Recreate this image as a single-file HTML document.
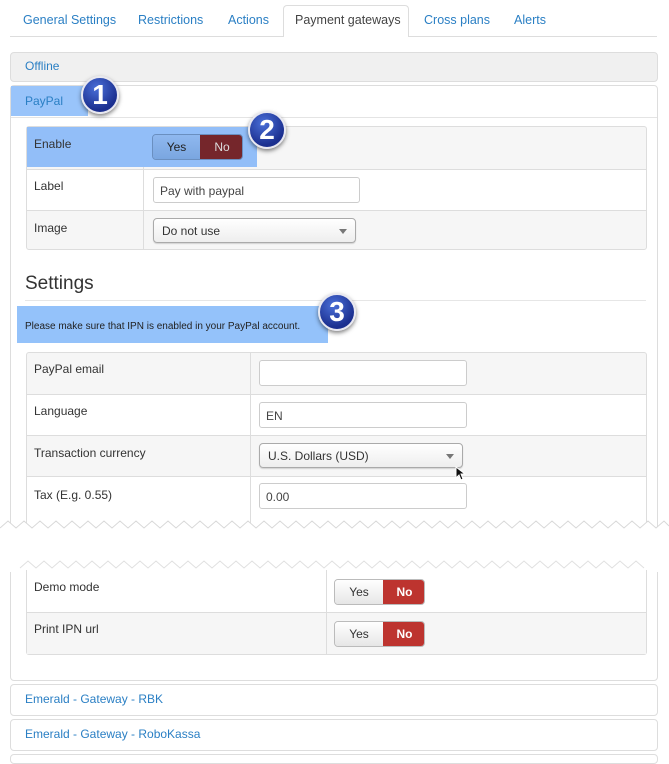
<!DOCTYPE html>
<html><head><style>
*{box-sizing:border-box;margin:0;padding:0}
body{width:669px;height:758px;background:#fff;font-family:"Liberation Sans",Arial,sans-serif;font-size:12px;color:#333;position:relative;overflow:hidden}
.a{position:absolute}
.lnk{color:#2a7fc4}
.tab{position:absolute;top:13px;font-size:12.5px;color:#2a7fc4}
.panel{position:absolute;left:10px;width:648px;border:1px solid #ddd;border-radius:4px;background:#fff}
.cell{position:absolute;font-size:12px;color:#333}
.inp{position:absolute;border:1px solid #ccc;border-radius:3px;background:#fff;height:26px;font-size:12px;padding:6px 6px;color:#444}
.sel{position:absolute;border:1px solid #aaa;border-radius:4px;background:linear-gradient(#fff,#eee);height:25px;font-size:12px;padding:5px 8px;color:#333;box-shadow:0 1px 1px rgba(0,0,0,.15)}
.sel:after{content:"";position:absolute;right:8px;top:10px;border-left:4px solid transparent;border-right:4px solid transparent;border-top:5px solid #777}
.badge{position:absolute;width:38px;height:38px;border-radius:50%;background:radial-gradient(circle at 40% 30%,#4a6fd8,#1b2f8f 70%);border:2px solid #e8e8f0;box-shadow:0 2px 4px rgba(0,0,0,.5);color:#fff;font-weight:bold;font-size:28px;text-align:center;line-height:34px}
.tg{position:absolute;width:91px;height:26px;border-radius:4px;overflow:hidden;border:1px solid #bbb;font-size:12px}
.tg span{position:absolute;top:0;height:100%;line-height:24px;text-align:center}
</style></head><body>
<div class="a" style="left:10px;top:36px;width:647px;height:1px;background:#ddd"></div>
<div class="a" style="left:283px;top:5px;width:126px;height:32px;border:1px solid #ddd;border-bottom:none;border-radius:4px 4px 0 0;background:#fff"></div>
<div class="tab" style="left:23px">General Settings</div>
<div class="tab" style="left:138px">Restrictions</div>
<div class="tab" style="left:228px">Actions</div>
<div class="tab" style="left:295px;color:#444">Payment gateways</div>
<div class="tab" style="left:424px">Cross plans</div>
<div class="tab" style="left:514px">Alerts</div>

<div class="panel" style="top:52px;height:30px;background:#f0f0f0"></div>
<div class="a lnk" style="left:25px;top:59px">Offline</div>

<div class="panel" style="top:85px;height:596px"></div>
<div class="a" style="left:11px;top:86px;width:77px;height:30px;background:#99c4fa"></div>
<div class="a" style="left:11px;top:117px;width:646px;height:1px;background:#e4e4e4"></div>
<div class="a lnk" style="left:25px;top:94px">PayPal</div>

<div class="a" style="left:26px;top:126px;width:621px;height:124px;border:1px solid #ddd;border-radius:3px;background:#f6f6f6"></div>
<div class="a" style="left:27px;top:169px;width:619px;height:42px;background:#fff;border-top:1px solid #ddd;border-bottom:1px solid #ddd"></div>
<div class="a" style="left:143px;top:127px;width:1px;height:122px;background:#ddd"></div>
<div class="a" style="left:27px;top:127px;width:230px;height:40px;background:#92bef8"></div>
<div class="cell" style="left:34px;top:137px">Enable</div>
<div class="cell" style="left:34px;top:179px">Label</div>
<div class="cell" style="left:34px;top:221px">Image</div>
<div class="tg" style="left:152px;top:134px;border-color:#6a8fc0"><span style="left:0;width:47px;background:linear-gradient(#8fb8ef,#7aa6e0);color:#222">Yes</span><span style="left:47px;width:44px;background:#75262b;color:#ddd">No</span></div>
<div class="inp" style="left:153px;top:177px;width:207px">Pay with paypal</div>
<div class="sel" style="left:153px;top:218px;width:203px">Do not use</div>

<div class="badge" style="left:81px;top:76px">1</div>
<div class="badge" style="left:248px;top:111px">2</div>

<div class="a" style="left:25px;top:273px;font-size:19px;color:#333">Settings</div>
<div class="a" style="left:25px;top:300px;width:621px;height:1px;background:#e6e6e6"></div>
<div class="a" style="left:17px;top:306px;width:311px;height:37px;background:#94c2fa"></div>
<div class="a" style="left:25px;top:321px;font-size:10px;color:#222">Please make sure that IPN is enabled in your PayPal account.</div>
<div class="badge" style="left:318px;top:293px">3</div>

<div class="a" style="left:26px;top:352px;width:621px;height:190px;border:1px solid #ddd;border-radius:3px;background:#f6f6f6"></div>
<div class="a" style="left:27px;top:394px;width:619px;height:42px;background:#fff;border-top:1px solid #ddd;border-bottom:1px solid #ddd"></div>
<div class="a" style="left:27px;top:476px;width:619px;height:60px;background:#fff;border-top:1px solid #ddd;border-bottom:1px solid #ddd"></div>
<div class="a" style="left:250px;top:353px;width:1px;height:180px;background:#ddd"></div>
<div class="cell" style="left:34px;top:362px">PayPal email</div>
<div class="cell" style="left:34px;top:404px">Language</div>
<div class="cell" style="left:34px;top:446px">Transaction currency</div>
<div class="cell" style="left:34px;top:488px">Tax (E.g. 0.55)</div>
<div class="inp" style="left:259px;top:360px;width:208px"></div>
<div class="inp" style="left:259px;top:402px;width:208px">EN</div>
<div class="sel" style="left:259px;top:443px;width:204px">U.S. Dollars (USD)</div>
<div class="inp" style="left:259px;top:483px;width:208px">0.00</div>
<svg class="a" style="left:455px;top:466px" width="12" height="16"><path d="M1 1 L1 12 L4 9 L6 14 L8 13 L6 8 L10 8 Z" fill="#111" stroke="#fff" stroke-width="1"/></svg>

<svg class="a" style="left:0;top:518px" width="669" height="54">
<path d="M0 10 L8 3 L16 10 L24 3 L32 10 L40 3 L48 10 L56 3 L64 10 L72 3 L80 10 L88 3 L96 10 L104 3 L112 10 L120 3 L128 10 L136 3 L144 10 L152 3 L160 10 L168 3 L176 10 L184 3 L192 10 L200 3 L208 10 L216 3 L224 10 L232 3 L240 10 L248 3 L256 10 L264 3 L272 10 L280 3 L288 10 L296 3 L304 10 L312 3 L320 10 L328 3 L336 10 L344 3 L352 10 L360 3 L368 10 L376 3 L384 10 L392 3 L400 10 L408 3 L416 10 L424 3 L432 10 L440 3 L448 10 L456 3 L464 10 L472 3 L480 10 L488 3 L496 10 L504 3 L512 10 L520 3 L528 10 L536 3 L544 10 L552 3 L560 10 L568 3 L576 10 L584 3 L592 10 L600 3 L608 10 L616 3 L624 10 L632 3 L640 10 L648 3 L656 10 L664 3 L669 8 L669 54 L0 54Z" fill="#fff"/>
<path d="M0 10 L8 3 L16 10 L24 3 L32 10 L40 3 L48 10 L56 3 L64 10 L72 3 L80 10 L88 3 L96 10 L104 3 L112 10 L120 3 L128 10 L136 3 L144 10 L152 3 L160 10 L168 3 L176 10 L184 3 L192 10 L200 3 L208 10 L216 3 L224 10 L232 3 L240 10 L248 3 L256 10 L264 3 L272 10 L280 3 L288 10 L296 3 L304 10 L312 3 L320 10 L328 3 L336 10 L344 3 L352 10 L360 3 L368 10 L376 3 L384 10 L392 3 L400 10 L408 3 L416 10 L424 3 L432 10 L440 3 L448 10 L456 3 L464 10 L472 3 L480 10 L488 3 L496 10 L504 3 L512 10 L520 3 L528 10 L536 3 L544 10 L552 3 L560 10 L568 3 L576 10 L584 3 L592 10 L600 3 L608 10 L616 3 L624 10 L632 3 L640 10 L648 3 L656 10 L664 3 L669 8" fill="none" stroke="#d8d8d8" stroke-width="1"/>
<path d="M20 50 L28 43 L36 50 L44 43 L52 50 L60 43 L68 50 L76 43 L84 50 L92 43 L100 50 L108 43 L116 50 L124 43 L132 50 L140 43 L148 50 L156 43 L164 50 L172 43 L180 50 L188 43 L196 50 L204 43 L212 50 L220 43 L228 50 L236 43 L244 50 L252 43 L260 50 L268 43 L276 50 L284 43 L292 50 L300 43 L308 50 L316 43 L324 50 L332 43 L340 50 L348 43 L356 50 L364 43 L372 50 L380 43 L388 50 L396 43 L404 50 L412 43 L420 50 L428 43 L436 50 L444 43 L452 50 L460 43 L468 50 L476 43 L484 50 L492 43 L500 50 L508 43 L516 50 L524 43 L532 50 L540 43 L548 50 L556 43 L564 50 L572 43 L580 50 L588 43 L596 50 L604 43 L612 50 L620 43 L628 50 L636 43 L644 50" fill="none" stroke="#e0e0e0" stroke-width="1"/>
</svg>

<div class="a" style="left:26px;top:570px;width:621px;height:85px;border:1px solid #ddd;border-top:none;border-radius:0 0 3px 3px;background:#fff"></div>
<div class="a" style="left:27px;top:612px;width:619px;height:42px;background:#f6f6f6;border-top:1px solid #ddd"></div>
<div class="a" style="left:326px;top:570px;width:1px;height:84px;background:#ddd"></div>
<div class="cell" style="left:34px;top:580px">Demo mode</div>
<div class="cell" style="left:34px;top:622px">Print IPN url</div>
<div class="tg" style="left:334px;top:579px"><span style="left:0;width:48px;background:linear-gradient(#fff,#e6e6e6);color:#333">Yes</span><span style="left:48px;width:43px;background:#bd342f;color:#fff;font-weight:bold">No</span></div>
<div class="tg" style="left:334px;top:621px"><span style="left:0;width:48px;background:linear-gradient(#fff,#e6e6e6);color:#333">Yes</span><span style="left:48px;width:43px;background:#bd342f;color:#fff;font-weight:bold">No</span></div>

<div class="panel" style="top:684px;height:32px"></div>
<div class="a lnk" style="left:25px;top:692px">Emerald - Gateway - RBK</div>
<div class="panel" style="top:719px;height:32px"></div>
<div class="a lnk" style="left:25px;top:727px">Emerald - Gateway - RoboKassa</div>
<div class="panel" style="top:754px;height:10px"></div>
</body></html>
